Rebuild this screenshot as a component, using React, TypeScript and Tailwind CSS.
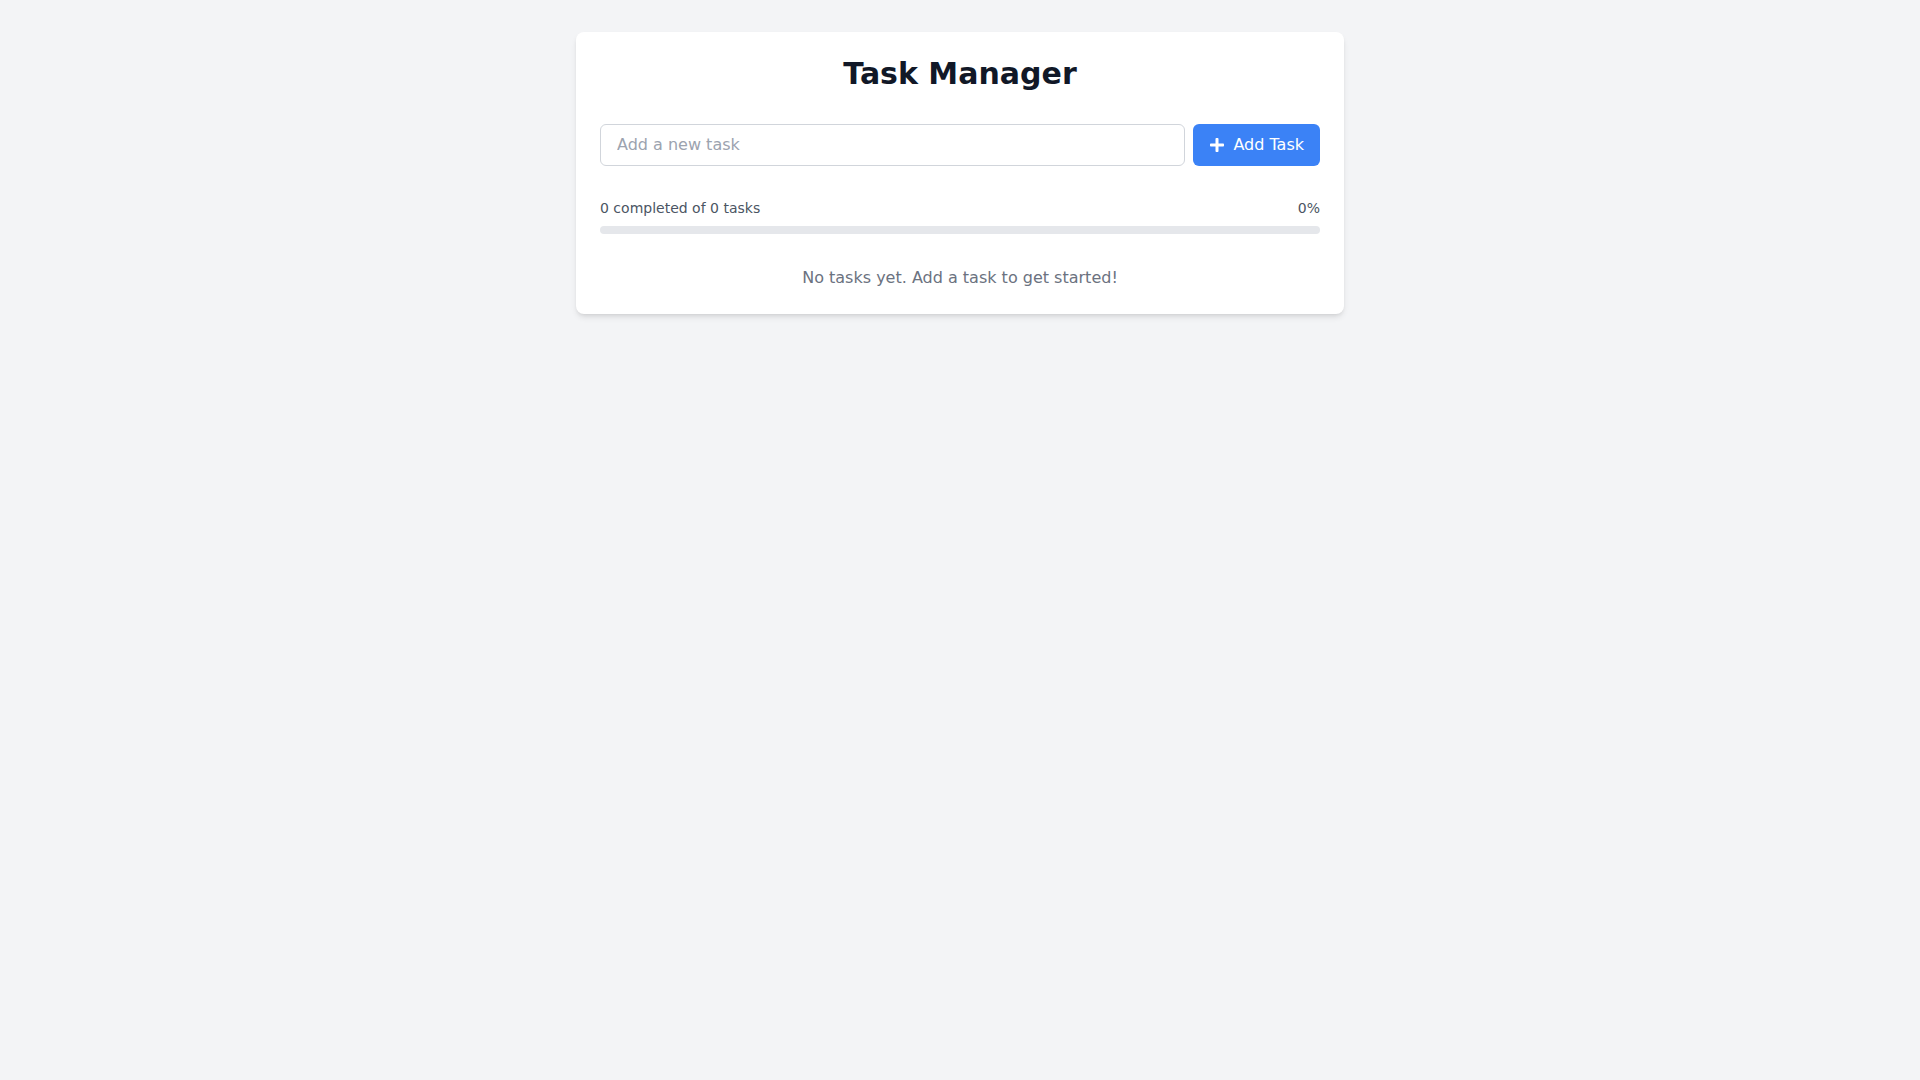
import { useState } from "react";
import { FaPlus } from "react-icons/fa";

type Task = { id: number; text: string; done: boolean };

export default function App() {
  const [tasks, setTasks] = useState<Task[]>([]);
  const [input, setInput] = useState("");

  const completed = tasks.filter((t) => t.done).length;
  const percent = tasks.length === 0 ? 0 : Math.round((completed / tasks.length) * 100);

  const addTask = () => {
    const text = input.trim();
    if (!text) return;
    setTasks([...tasks, { id: Date.now(), text, done: false }]);
    setInput("");
  };

  return (
    <div className="min-h-screen bg-[#f3f4f6] pt-8 font-['DejaVu_Sans',sans-serif]">
      <div className="mx-auto max-w-3xl rounded-lg bg-white p-6 shadow-md">
        <h1 className="mb-8 text-center text-3xl font-bold text-[#111827]">Task Manager</h1>

        <div className="mb-8 flex gap-2">
          <input
            type="text"
            value={input}
            onChange={(e) => setInput(e.target.value)}
            onKeyDown={(e) => e.key === "Enter" && addTask()}
            placeholder="Add a new task"
            className="flex-1 rounded-md border border-[#d1d5db] px-4 py-2 text-base text-[#111827] placeholder:text-[#9ca3af] focus:outline-none"
          />
          <button
            onClick={addTask}
            className="flex items-center gap-2 rounded-md bg-[#3b82f6] px-4 py-2 text-base text-white hover:bg-[#2563eb]"
          >
            <FaPlus size={16} />
            Add Task
          </button>
        </div>

        <div className="mb-8">
          <div className="mb-2 flex justify-between text-sm text-[#4b5563]">
            <span>
              {completed} completed of {tasks.length} tasks
            </span>
            <span>{percent}%</span>
          </div>
          <div className="h-2 w-full rounded-full bg-[#e5e7eb]">
            <div className="h-2 rounded-full bg-[#3b82f6]" style={{ width: `${percent}%` }} />
          </div>
        </div>

        {tasks.length === 0 ? (
          <p className="text-center text-base text-[#6b7280]">No tasks yet. Add a task to get started!</p>
        ) : (
          <ul className="space-y-2">
            {tasks.map((t) => (
              <li key={t.id} className="flex items-center gap-3 rounded-md border border-[#e5e7eb] px-4 py-2">
                <input
                  type="checkbox"
                  checked={t.done}
                  onChange={() =>
                    setTasks(tasks.map((x) => (x.id === t.id ? { ...x, done: !x.done } : x)))
                  }
                />
                <span className={t.done ? "text-[#9ca3af] line-through" : "text-[#1f2937]"}>{t.text}</span>
              </li>
            ))}
          </ul>
        )}
      </div>
    </div>
  );
}
